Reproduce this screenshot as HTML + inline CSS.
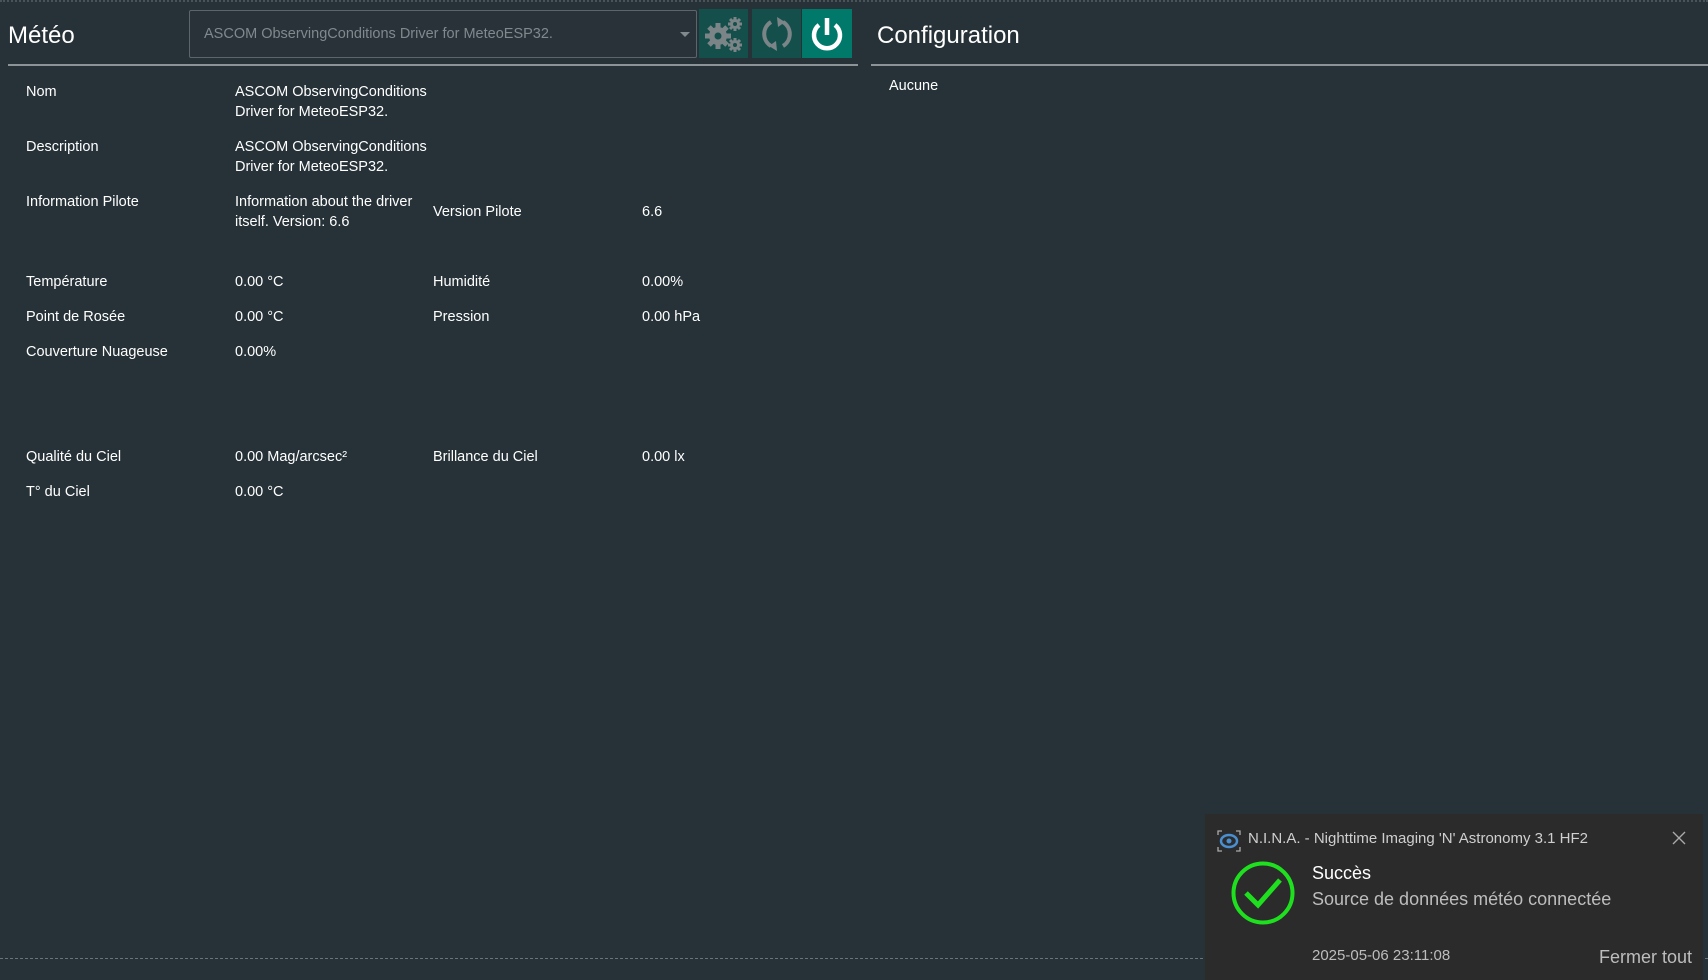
<!DOCTYPE html>
<html><head><meta charset="utf-8"><style>
*{margin:0;padding:0;box-sizing:border-box}
html,body{width:1708px;height:980px;overflow:hidden;background:#263238;font-family:"Liberation Sans",sans-serif;color:#fff}
.abs{position:absolute}
.t{position:absolute;font-size:14.5px;line-height:20px;white-space:nowrap;color:#fff;margin-top:2px}
.top{position:absolute;left:0;top:0;width:1708px;height:0;border-top:2px dotted #4a5358}
.btn{position:absolute;top:9px;width:49px;height:49px;background:#154f4b;display:flex;align-items:center;justify-content:center}
</style></head><body>
<div class="top"></div>
<div class="abs" style="left:8px;top:22px;font-size:24px;color:#fff">Météo</div>
<div class="abs" style="left:189px;top:10px;width:508px;height:48px;border:1px solid #5b656b;border-radius:2px;background:#283238"></div>
<div class="abs" style="left:204px;top:26px;font-size:14.5px;color:#80898e">ASCOM ObservingConditions Driver for MeteoESP32.</div>
<div class="abs" style="left:680px;top:32px;width:0;height:0;border-left:5px solid transparent;border-right:5px solid transparent;border-top:5px solid #80898e"></div>
<div class="btn" style="left:699px"><svg width="44" height="44" viewBox="0 0 44 44"><g fill="#7b8587"><circle cx="16" cy="24" r="9"/><g stroke="#7b8587" stroke-width="5"><line x1="16" y1="11" x2="16" y2="37"/><line x1="3" y1="24" x2="29" y2="24"/><line x1="7" y1="15" x2="25" y2="33"/><line x1="25" y1="15" x2="7" y2="33"/></g><circle cx="33" cy="12" r="5"/><g stroke="#7b8587" stroke-width="3"><line x1="33" y1="5" x2="33" y2="19"/><line x1="26" y1="12" x2="40" y2="12"/><line x1="28" y1="7" x2="38" y2="17"/><line x1="38" y1="7" x2="28" y2="17"/></g><circle cx="33" cy="33" r="5"/><g stroke="#7b8587" stroke-width="3"><line x1="33" y1="26" x2="33" y2="40"/><line x1="26" y1="33" x2="40" y2="33"/><line x1="28" y1="28" x2="38" y2="38"/><line x1="38" y1="28" x2="28" y2="38"/></g></g><circle cx="16" cy="24" r="3.5" fill="#154f4b"/><circle cx="33" cy="12" r="2" fill="#154f4b"/><circle cx="33" cy="33" r="2" fill="#154f4b"/></svg></div>
<div class="btn" style="left:752px"><svg width="40" height="40" viewBox="0 0 40 40" fill="none" stroke="#7b8587" stroke-width="4"><path d="M14 8 A14 14 0 0 0 14 32"/><path d="M26 32 A14 14 0 0 0 26 8"/><path d="M20 3 L28 8 L21 13 Z" fill="#7b8587" stroke="none"/><path d="M20 37 L12 32 L19 27 Z" fill="#7b8587" stroke="none"/></svg></div>
<div class="btn" style="left:802px;background:#00796b;width:50px"><svg width="40" height="40" viewBox="0 0 40 40" fill="none" stroke="#fff" stroke-width="4.5"><path d="M12 11 A13 13 0 1 0 28 11"/><line x1="20" y1="4" x2="20" y2="21"/></svg></div>
<div class="abs" style="left:8px;top:64px;width:850px;height:2px;background:#8c9498"></div>
<div class="abs" style="left:871px;top:64px;width:837px;height:2px;background:#8c9498"></div>
<div class="abs" style="left:877px;top:22px;font-size:24px">Configuration</div>
<div class="t" style="left:889px;top:74px">Aucune</div>

<div class="t" style="left:26px;top:80px">Nom</div>
<div class="t" style="left:235px;top:80px">ASCOM ObservingConditions</div>
<div class="t" style="left:235px;top:100px">Driver for MeteoESP32.</div>
<div class="t" style="left:26px;top:135px">Description</div>
<div class="t" style="left:235px;top:135px">ASCOM ObservingConditions</div>
<div class="t" style="left:235px;top:155px">Driver for MeteoESP32.</div>
<div class="t" style="left:26px;top:190px">Information Pilote</div>
<div class="t" style="left:235px;top:190px">Information about the driver</div>
<div class="t" style="left:235px;top:210px">itself. Version: 6.6</div>
<div class="t" style="left:433px;top:200px">Version Pilote</div>
<div class="t" style="left:642px;top:200px">6.6</div>

<div class="t" style="left:26px;top:270px">Température</div>
<div class="t" style="left:235px;top:270px">0.00 °C</div>
<div class="t" style="left:433px;top:270px">Humidité</div>
<div class="t" style="left:642px;top:270px">0.00%</div>
<div class="t" style="left:26px;top:305px">Point de Rosée</div>
<div class="t" style="left:235px;top:305px">0.00 °C</div>
<div class="t" style="left:433px;top:305px">Pression</div>
<div class="t" style="left:642px;top:305px">0.00 hPa</div>
<div class="t" style="left:26px;top:340px">Couverture Nuageuse</div>
<div class="t" style="left:235px;top:340px">0.00%</div>

<div class="t" style="left:26px;top:445px">Qualité du Ciel</div>
<div class="t" style="left:235px;top:445px">0.00 Mag/arcsec²</div>
<div class="t" style="left:433px;top:445px">Brillance du Ciel</div>
<div class="t" style="left:642px;top:445px">0.00 lx</div>
<div class="t" style="left:26px;top:480px">T° du Ciel</div>
<div class="t" style="left:235px;top:480px">0.00 °C</div>

<div class="abs" style="left:0;top:958px;width:1708px;border-top:1px dashed #6a7378"></div>

<div class="abs" style="left:1205px;top:814px;width:498px;height:166px;background:#2b2b2b">
  <svg class="abs" style="left:12px;top:16px" width="24" height="22" viewBox="0 0 24 22"><g stroke="#aaa" stroke-width="1.3" fill="none"><path d="M1 5V1H5M19 1H23V5M23 17V21H19M5 21H1V17"/></g><ellipse cx="12" cy="11" rx="8" ry="6" fill="none" stroke="#4a8fd0" stroke-width="2.5"/><circle cx="12" cy="11" r="2.5" fill="#4a8fd0"/></svg>
  <div class="abs" style="left:43px;top:16px;font-size:15px;color:#cfcfcf">N.I.N.A. - Nighttime Imaging 'N' Astronomy 3.1 HF2</div>
  <svg class="abs" style="left:467px;top:17px" width="14" height="14" viewBox="0 0 14 14" stroke="#aaa" stroke-width="1.3"><line x1="1" y1="1" x2="13" y2="13"/><line x1="13" y1="1" x2="1" y2="13"/></svg>
  <svg class="abs" style="left:25px;top:46px" width="66" height="66" viewBox="0 0 66 66" fill="none" stroke="#1ee01e" stroke-width="4"><circle cx="33" cy="33" r="29.5"/><path d="M16 33 L28 45 L50 20" stroke-width="5"/></svg>
  <div class="abs" style="left:107px;top:49px;font-size:18px;color:#fff">Succès</div>
  <div class="abs" style="left:107px;top:75px;font-size:18px;color:#bdbdbd">Source de données météo connectée</div>
  <div class="abs" style="left:107px;top:133px;font-size:15px;color:#bdbdbd">2025-05-06 23:11:08</div>
  <div class="abs" style="left:394px;top:133px;font-size:18px;color:#bdbdbd">Fermer tout</div>
</div>
</body></html>
